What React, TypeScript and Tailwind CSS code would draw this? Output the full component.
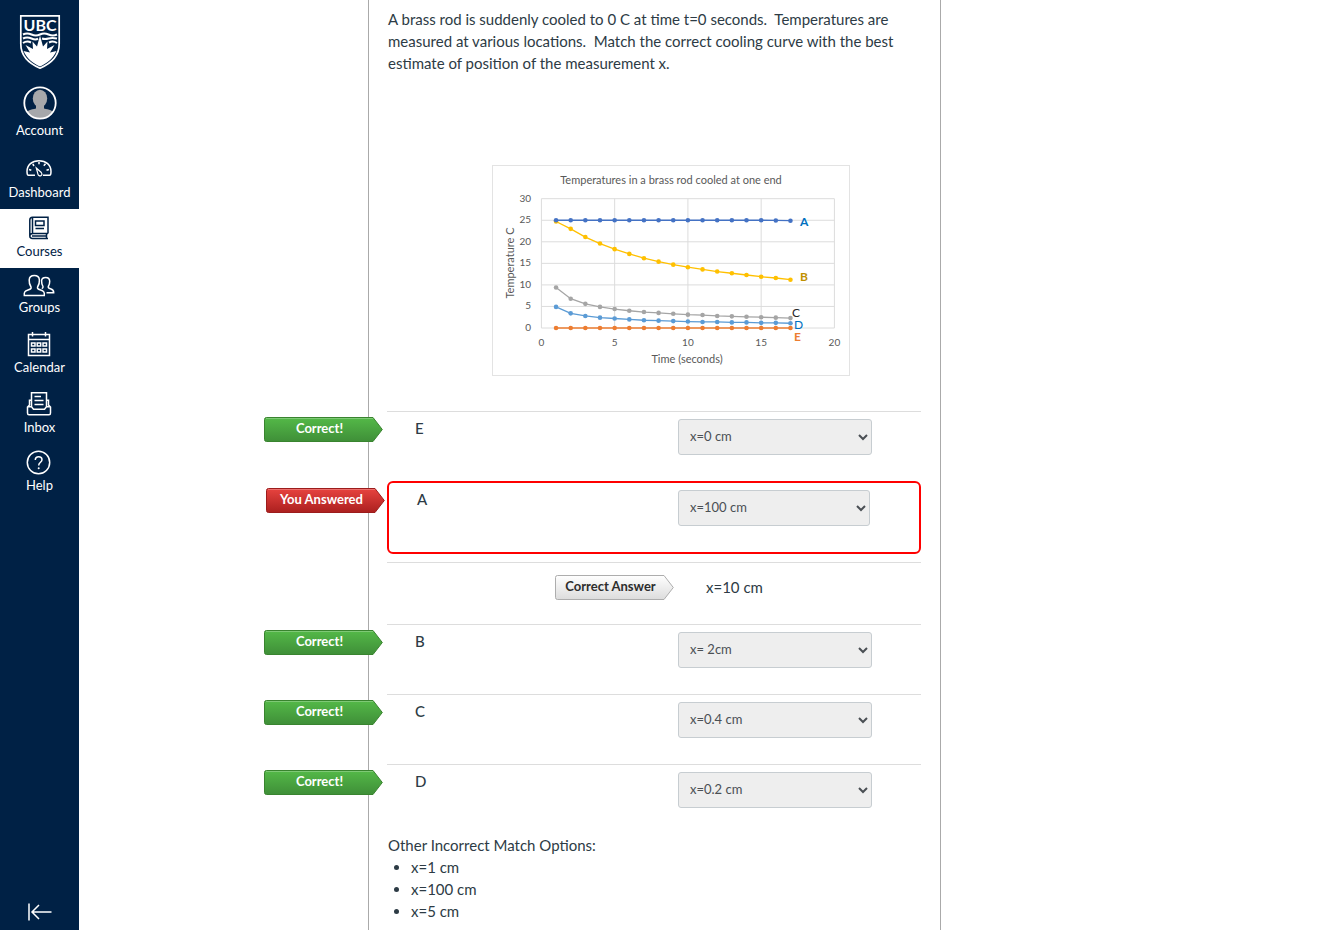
import { useId } from "react";
import type { ReactNode } from "react";

function Crest() {
  return (
    <svg width="42" height="56" viewBox="0 0 42 56" role="img" aria-label="UBC">
      <path d="M1.8 1.8H40.2V30C40.2 42 32 49.500 21 54.200C10 49.500 1.800 42 1.800 30Z" fill="#002145" stroke="#fff" strokeWidth="1.700" />
      <text x="21" y="16.500" textAnchor="middle" fontSize="16" fontWeight="700" fill="#fff" fontFamily="Lato, sans-serif">UBC</text>
      <g fill="none" stroke="#fff" strokeWidth="2">
        <path d="M4 20.500Q8 18.500 12.500 20.500T21 20.500T29.500 20.500T38 20.500" />
        <path d="M4 24.500Q8 22.500 12.500 24.500T19 24.500M23 24.500Q26 25.500 29.500 24.500T38 24.500" />
        <path d="M4 29Q8 26.500 12 28.500M30 28.500Q34 26.500 38 29" />
      </g>
      <path d="M4.500 37L11 38.500L6.500 31L14 35L13.500 27.500L18 32.500L21 21.500L24 32.500L28.500 27.500L28 35L35.500 31L31 38.500L37.500 37C34 44.500 28 49.500 21 52.500C14 49.500 8 44.500 4.500 37Z" fill="#fff" />
    </svg>
  );
}

function Avatar() {
  const id = useId();
  return (
    <svg width="34" height="34" viewBox="0 0 34 34" className="mb-px" aria-hidden="true">
      <defs>
        <clipPath id={id}>
          <circle cx="17" cy="17" r="15.500" />
        </clipPath>
      </defs>
      <circle cx="17" cy="17" r="15.700" fill="#002145" />
      <g clipPath={`url(#${id})`} fill="#a6a8ab">
        <ellipse cx="17" cy="12.500" rx="7.200" ry="8.700" />
        <path d="M13 18H21V22.500C26 23.500 30.500 24.500 31 28V34H3V28C3.500 24.500 8 23.500 13 22.500Z" />
      </g>
      <circle cx="17" cy="17" r="15.700" fill="none" stroke="#fff" strokeWidth="1.800" />
    </svg>
  );
}

function Glyph({ children }: { children: ReactNode }) {
  return (
    <svg width="32" height="26" viewBox="0 0 32 26" className="mr-px" fill="none" stroke="currentColor" strokeWidth="1.500" aria-hidden="true">
      {children}
    </svg>
  );
}

const DashboardIcon = (
  <Glyph>
    <path d="M12 18.300H5.500C4 18.300 4 16.500 4 14.500C4 8 9 3.700 16 3.700S28 8 28 14.500C28 16.500 28 18.300 26.500 18.300H20" />
    <path d="M13.300 11L18.300 15.500C19.300 16.800 19 18 18 18.600C16.700 19.200 15.300 18.600 15 17.300Z" strokeWidth="1.200" />
    <path d="M16 5V7.300M9.800 7L11 9M22.500 6.700L20.800 8.800M6 12.500L8.300 13.300M26 12.500L23.500 13.300" />
  </Glyph>
);
const CoursesIcon = (
  <Glyph>
    <path d="M25 17.500H10C7.500 17.500 6.800 18.300 6.800 20S7.500 22.400 9.500 22.400H25M6.800 20V4C6.800 2.200 7.800 1.200 9.500 1.200H25V17.500M9.500 1.500V17M23.500 17.500V22M9 20H23" />
    <path d="M12.500 4.900H21V9.500H12.500ZM12.500 12.500H21" />
  </Glyph>
);
const GroupsIcon = (
  <Glyph>
    <path d="M1.300 23.500C.9 20 1.800 19 5 18C8.500 17 8.300 16 8 15C6.500 12.500 6 10.500 6.200 8C6.400 5 8.500 3.600 11.300 3.600S16.200 5 16.400 8C16.600 10.500 16.100 12.500 14.600 15C14.300 16 14.100 17 17.600 18C20.800 19 21.700 20 21.300 23.500Z" />
    <path d="M18.600 9C18.600 6.500 20.300 5.500 22.700 5.500C25.200 5.500 26.600 6.900 26.700 9.200C26.800 11.500 26.300 12.800 25.300 14.500C25 15.500 25.500 16.200 27.500 16.800C30.300 17.600 30.800 18.500 30.700 20.800H23.500M18.600 9C18.500 11.500 19.100 12.800 20 14.500C20.200 15.400 20 16 18.800 16.600" />
  </Glyph>
);
const CalendarIcon = (
  <Glyph>
    <path d="M5.500 2.500H26.500V23.500H5.500ZM5.500 7.500H26.500M9.500 0V4.500M22.500 0V4.500" />
    <path d="M8.500 11H12V14H8.500ZM14.200 11H17.700V14H14.200ZM20 11H23.500V14H20ZM8.500 17H12V20H8.500ZM14.200 17H17.700V20H14.200ZM20 17H23.500V20H20Z" />
  </Glyph>
);
const InboxIcon = (
  <Glyph>
    <path d="M8.500 14.500V.8H23.500V14.500M11.500 4.500H18M11.500 8.500H20.500M11.500 12.500H20.500" />
    <path d="M8.500 8.300H6.500V13L4.500 15V21C4.500 22.200 5 22.800 6 22.800H26C27 22.800 27.500 22.200 27.500 21V15L25.500 13V8.300H23.500M4.500 14.800H8.500L10.500 17.300H21.500L23.500 14.800H27.500" />
  </Glyph>
);
const HelpIcon = (
  <Glyph>
    <circle cx="15.500" cy="12.500" r="11.200" />
    <path d="M12.300 10C12.300 7.700 13.700 6.700 15.700 6.700S19 7.800 19 9.700C19 12.300 15.700 12.300 15.700 15.500" />
    <circle cx="15.700" cy="18.200" r="1" fill="currentColor" stroke="none" />
  </Glyph>
);

const navItems = [
  { label: "Account", icon: <Avatar />, size: "h-[69px]", active: false },
  { label: "Dashboard", icon: DashboardIcon, size: "h-[62px]", active: false },
  { label: "Courses", icon: CoursesIcon, size: "h-[59px]", active: true },
  { label: "Groups", icon: GroupsIcon, size: "h-14", active: false },
  { label: "Calendar", icon: CalendarIcon, size: "h-[60px]", active: false },
  { label: "Inbox", icon: InboxIcon, size: "h-[60px]", active: false },
  { label: "Help", icon: HelpIcon, size: "h-[58px]", active: false },
];

function Sidebar() {
  return (
    <nav aria-label="Global navigation" className="flex w-[79px] shrink-0 flex-col bg-[#002145] text-white">
      <a href="#home" className="flex justify-center pt-3.5 pb-1">
        <Crest />
      </a>
      <ul className="pt-1">
        {navItems.map((item) => (
          <li key={item.label}>
            <a
              href={`#${item.label.toLowerCase()}`}
              className={`flex flex-col items-center justify-end pb-[7px] text-[13px] leading-[19px] ${item.size} ${item.active ? "bg-white text-[#002145]" : ""}`}
            >
              {item.icon}
              {item.label}
            </a>
          </li>
        ))}
      </ul>
      <button type="button" aria-label="Minimize navigation" className="mt-auto flex justify-center pb-2">
        <svg width="24" height="20" viewBox="0 0 24 20" fill="none" stroke="#fff" strokeWidth="1.500" aria-hidden="true">
          <path d="M1 1.500V18.500M23.500 10H4.500M11 3L4 10L11 17" />
        </svg>
      </button>
    </nav>
  );
}

const series = {
  A: { color: "#4472c4", values: [25, 25, 25, 25, 25, 25, 25, 25, 25, 25, 25, 25, 25, 25, 25, 24.95, 24.9] },
  B: { color: "#ffc000", values: [24.7, 23, 21.1, 19.6, 18.3, 17.2, 16.2, 15.4, 14.7, 14.1, 13.6, 13.1, 12.7, 12.3, 11.9, 11.6, 11.2] },
  C: { color: "#a5a5a5", values: [9.4, 6.8, 5.6, 4.9, 4.4, 4, 3.7, 3.5, 3.3, 3.1, 3, 2.8, 2.7, 2.6, 2.5, 2.4, 2.3] },
  D: { color: "#5b9bd5", values: [4.9, 3.4, 2.8, 2.4, 2.2, 2, 1.8, 1.7, 1.6, 1.5, 1.4, 1.4, 1.3, 1.3, 1.2, 1.2, 1.1] },
  E: { color: "#ed7d31", values: [0, 0, 0, 0, 0, 0, 0, 0, 0, 0, 0, 0, 0, 0, 0, 0, 0] },
};
const px = (t: number) => 49.4 + t * 14.65;
const py = (v: number) => 163 - v * 4.31;

function CoolingChart() {
  return (
    <svg width="358" height="211" viewBox="0 0 358 211" role="img" aria-label="Temperatures in a brass rod cooled at one end" fontFamily="Lato, sans-serif" fontSize="10" fill="#595959">
      <rect x=".5" y=".5" width="357" height="210" fill="#fff" stroke="#e3e3e3" />
      <g stroke="#dcdcdc" strokeWidth="1">
        {[0, 5, 10, 15, 20, 25, 30].map((v) => (
          <line key={v} x1={px(0)} x2={px(20)} y1={py(v)} y2={py(v)} />
        ))}
        {[0, 5, 10, 15, 20].map((t) => (
          <line key={t} x1={px(t)} x2={px(t)} y1={py(0)} y2={py(30)} />
        ))}
      </g>
      {[0, 5, 10, 15, 20, 25, 30].map((v) => (
        <text key={v} x="39" y={py(v) + 3} textAnchor="end">{v}</text>
      ))}
      {[0, 5, 10, 15, 20].map((t) => (
        <text key={t} x={px(t)} y="181" textAnchor="middle">{t}</text>
      ))}
      <g fontSize="11" textAnchor="middle">
        <text x="179" y="19">Temperatures in a brass rod cooled at one end</text>
        <text x="195" y="198">Time (seconds)</text>
        <text x="22" y="98" transform="rotate(-90 22 98)">Temperature C</text>
      </g>
      {[series.B, series.C, series.D, series.E, series.A].map((s) => (
        <g key={s.color} fill={s.color}>
          <polyline fill="none" stroke={s.color} strokeWidth="1.300" points={s.values.map((v, i) => `${px(i + 1)},${py(v)}`).join(" ")} />
          {s.values.map((v, i) => (
            <circle key={i} cx={px(i + 1)} cy={py(v)} r="2.300" />
          ))}
        </g>
      ))}
      <g fontSize="12" fontWeight="700">
        <text x="308" y="61" fill="#0070c0">A</text>
        <text x="308" y="116" fill="#bf9000">B</text>
        <text x="300" y="152" fill="#262626" fontWeight="400">C</text>
        <text x="302" y="164" fill="#0070c0" fontWeight="400">D</text>
        <text x="302" y="176" fill="#ed7d31">E</text>
      </g>
    </svg>
  );
}

const tagColors = {
  green: { from: "#54b948", to: "#3f8f38", edge: "#39842f", text: "text-white" },
  red: { from: "#e8433f", to: "#ab201f", edge: "#9c1c1c", text: "text-white" },
  gray: { from: "#ffffff", to: "#dcdcdc", edge: "#adadad", text: "text-[#2d2d2d]" },
};

function Tag({ tone, children }: { tone: keyof typeof tagColors; children: ReactNode }) {
  const id = useId();
  const c = tagColors[tone];
  return (
    <span className={`relative flex h-[25px] w-[119px] justify-center pr-2 text-[13px] leading-[23px] font-bold ${c.text}`}>
      <svg className="absolute inset-0" width="119" height="25" viewBox="0 0 119 25" aria-hidden="true">
        <defs>
          <linearGradient id={id} x1="0" y1="0" x2="0" y2="1">
            <stop offset="0" stopColor={c.from} />
            <stop offset="1" stopColor={c.to} />
          </linearGradient>
        </defs>
        <path d="M2.500 .5H109L118.300 12.500L109 24.500H2.500Q.5 24.500 .5 22.500V2.500Q.5 .5 2.500 .5Z" fill={`url(#${id})`} stroke={c.edge} />
        <path d="M2 1.500H109" stroke="#fff" strokeOpacity=".25" />
      </svg>
      <span className="relative">{children}</span>
    </span>
  );
}

const options = ["x=0 cm", "x=100 cm", "x=10 cm", "x= 2cm", "x=0.4 cm", "x=0.2 cm", "x=1 cm", "x=5 cm"];

function Match({ name, value, wrong = false }: { name: string; value: string; wrong?: boolean }) {
  const id = `match-${name}`;
  return (
    <div className={wrong ? "relative mb-2 flex h-[73px] rounded-md border-2 border-[#f00] pt-[7px] pr-[49px] pl-7" : "relative flex h-[70px] border-t border-[#ddd] pt-[7px] pr-[49px] pl-7"}>
      <div className="absolute top-[5px] right-full mr-1">
        <Tag tone={wrong ? "red" : "green"}>{wrong ? "You Answered" : "Correct!"}</Tag>
      </div>
      <label htmlFor={id} className="flex-1 text-[15px] leading-[18px] font-medium">{name}</label>
      <select id={id} defaultValue={value} className={`h-9 rounded-[3px] border border-[#c7cdd1] bg-[#eee] pb-0.5 pl-[7px] text-[13px] text-[#4a4f54] ${wrong ? "w-48" : "w-[194px]"}`}>
        {options.map((o) => (
          <option key={o}>{o}</option>
        ))}
      </select>
    </div>
  );
}

export default function App() {
  return (
    <div className="flex min-h-screen bg-white font-[Lato,sans-serif] text-[#2d3b45]">
      <Sidebar />
      <main className="flex min-w-0 flex-1 pl-[289px]">
        <section className="w-full max-w-[573px] border-x border-[#aaa] pt-2 pr-[19px] pl-[18px] text-[15px] leading-[22px]">
          <p className="pl-px">
            A brass rod is suddenly cooled to 0 C at time t=0 seconds.&nbsp; Temperatures are measured at various locations.&nbsp; Match the correct cooling curve with the best estimate of position of the measurement x.
          </p>
          <div className="flex justify-center pt-[91px] pb-[35px] pl-[34px]">
            <CoolingChart />
          </div>
          <Match name="E" value="x=0 cm" />
          <Match name="A" value="x=100 cm" wrong />
          <div className="flex h-[62px] gap-8 border-t border-[#ddd] pt-3 pl-[168px]">
            <Tag tone="gray">Correct Answer</Tag>
            <span className="pt-px">x=10 cm</span>
          </div>
          <Match name="B" value="x= 2cm" />
          <Match name="C" value="x=0.4 cm" />
          <Match name="D" value="x=0.2 cm" />
          <h2 className="pl-px">Other Incorrect Match Options:</h2>
          <ul className="list-disc pl-6">
            <li>x=1 cm</li>
            <li>x=100 cm</li>
            <li>x=5 cm</li>
          </ul>
        </section>
      </main>
    </div>
  );
}
